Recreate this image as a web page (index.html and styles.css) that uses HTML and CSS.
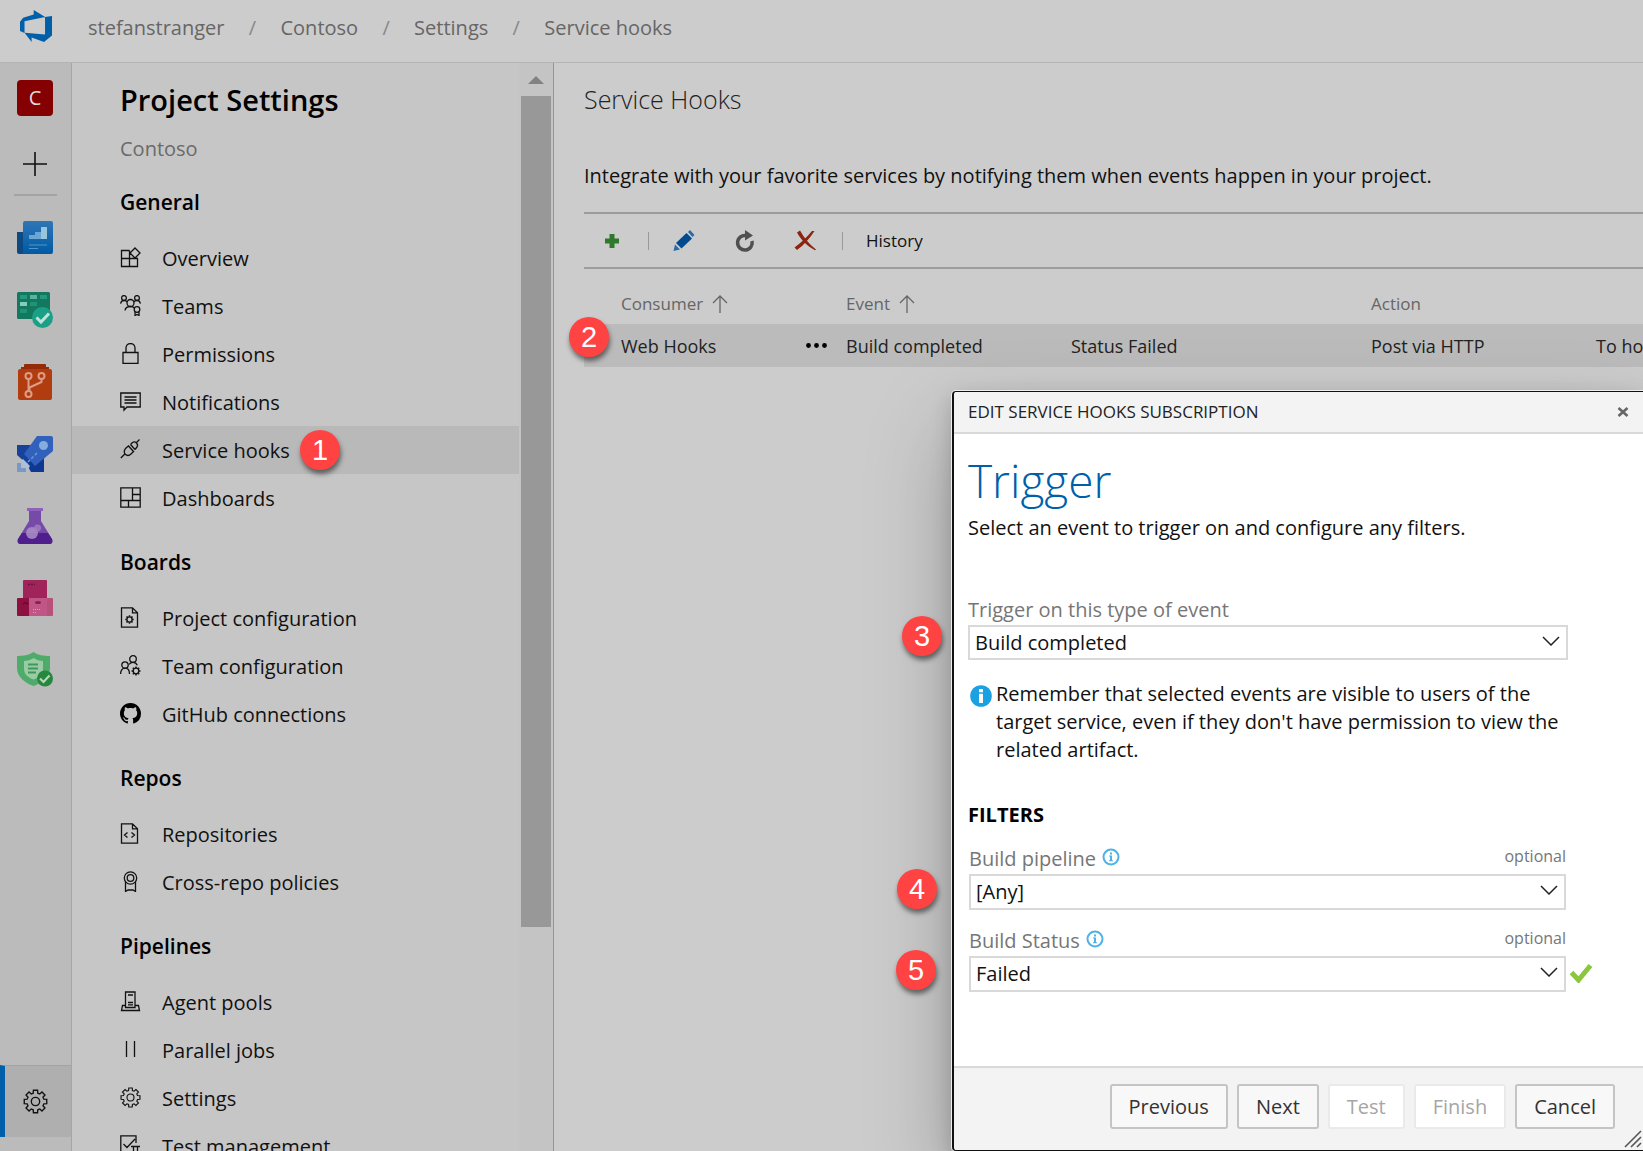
FILE: index.html
```html
<!DOCTYPE html>
<html lang="en">
<head>
<meta charset="utf-8">
<title>Service hooks - Project Settings</title>
<link rel="stylesheet" href="styles.css">
</head>
<body>
<svg class="defs" aria-hidden="true">
  <symbol id="gear" viewBox="0 0 24 24">
    <path d="M9.8 4 10 1.2H14L14.2 4 16.1 4.8 18.2 2.9 21.1 5.8 19.2 7.9 20 9.8 22.8 10V14L20 14.2 19.2 16.1 21.1 18.2 18.2 21.1 16.1 19.2 14.2 20 14 22.8H10L9.8 20 7.9 19.2 5.8 21.1 2.9 18.2 4.8 16.1 4 14.2 1.2 14V10L4 9.8 4.8 7.9 2.9 5.8 5.8 2.9 7.9 4.8Z"/>
    <circle cx="12" cy="12" r="4"/>
  </symbol>
  <symbol id="info" viewBox="0 0 18 18">
    <circle cx="9" cy="9" r="7.5" fill="none" stroke="#4db3e6" stroke-width="2"/>
    <path d="M8 4.6h2v2H8zM7 7.6h3v4.6h1v1H7v-1h1V8.6H7z" fill="#4db3e6"/>
  </symbol>
</svg>

<div class="app">
  <header class="topbar">
    <a class="logo" href="#" aria-label="Home"><svg viewBox="0 0 18 18" width="36" height="36"><path fill="#005fa9" d="M17 4v9.74l-4 3.28-6.2-2.26V17l-3.51-4.59 10.23.8V4.44zm-3.41.49L7.85 1v2.29L2.58 4.84 1 6.87v4.61l2.26 1V6.57z"/></svg></a>
    <nav class="crumbs" aria-label="Breadcrumb">
      <a href="#">stefanstranger</a><span class="slash">/</span>
      <a href="#">Contoso</a><span class="slash">/</span>
      <a href="#">Settings</a><span class="slash">/</span>
      <a href="#">Service hooks</a>
    </nav>
  </header>

  <div class="columns">
    <nav class="rail" aria-label="Project">
      <a class="rail-item rail-project" href="#"><span class="tile">C</span></a>
      <button class="rail-item rail-add" type="button" aria-label="Add"><svg width="26" height="26" viewBox="0 0 26 26"><path d="M13 1v24M1 13h24" stroke="#111" stroke-width="1.6"/></svg></button>
      <a class="rail-item" href="#" aria-label="Overview"><svg width="36" height="36" viewBox="0 0 36 36">
        <defs><linearGradient id="gb" x2="0" y2="1"><stop stop-color="#2f76b6"/><stop offset="1" stop-color="#005aa3"/></linearGradient></defs>
        <path d="M0 12h8v22H2a2 2 0 0 1-2-2z" fill="#0d4a82"/>
        <path d="M8 1h26a2 2 0 0 1 2 2v29a2 2 0 0 1-2 2H4c2 0 2-2 2-3V3a2 2 0 0 1 2-2z" fill="url(#gb)"/>
        <path d="M12 15h6v-3h6V7h6v12H12z" fill="#6ba5d3"/><path d="M24 7h6v12h-6z" fill="#98c6dd"/>
        <path d="M12 25h18M12 28.500h9" stroke="#4d96d0"/></svg></a>
      <a class="rail-item" href="#" aria-label="Boards"><svg width="36" height="36" viewBox="0 0 36 36">
        <rect width="33" height="27" rx="1.500" fill="#14785f"/>
        <path d="M3 3h7v4H3zM23 3h7v4h-7z" fill="#23997f"/><path d="M13 3h7v4h-7z" fill="#5ab39f"/><path d="M3 10h7v4H3z" fill="#86ccbd"/><path d="M13 10h7v4h-7zM3 17h7v4H3z" fill="#1a9579"/>
        <circle cx="25.500" cy="25.500" r="10.500" fill="#1aa086"/><path d="m19.500 25.500 4.500 4.500 8-8.500" fill="none" stroke="#c3e2dc" stroke-width="3"/></svg></a>
      <a class="rail-item" href="#" aria-label="Repos"><svg width="36" height="36" viewBox="0 0 36 36">
        <path d="M7 1a1 1 0 0 1 1-1h20a1 1 0 0 1 1 1v2h3v3H4V3h3z" fill="#942a08"/>
        <rect x="1" y="5" width="34" height="31" rx="2" fill="#b13c10"/>
        <g fill="none" stroke="#dd9c86" stroke-width="2"><circle cx="11.500" cy="12" r="3"/><circle cx="24.500" cy="12" r="3"/><circle cx="11.500" cy="30" r="3"/><path d="M11.500 15v12M24.500 15v3l-12 5.500v3"/></g></svg></a>
      <a class="rail-item" href="#" aria-label="Pipelines"><svg width="36" height="36" viewBox="0 0 36 36">
        <path d="M0 9h18v18H9l-9-8z" fill="#16429b"/><path d="M12 22h15v14H14l-4-7z" fill="#0f3893"/>
        <path d="M20 0h14a2 2 0 0 1 2 2v13L18 30 7 18z" fill="#3161bd"/>
        <circle cx="26.500" cy="9.500" r="4.500" fill="#84acdc"/>
        <path d="m20 17-9 9" stroke="#6c96d7" stroke-width="1.500" stroke-dasharray="3 2"/>
        <path d="M0 27h4v5h5v4H0z" fill="#7899c8"/><path d="m3 26 3-3 7 7-3 5-2-4z" fill="#aebfd8"/></svg></a>
      <a class="rail-item" href="#" aria-label="Test Plans"><svg width="36" height="36" viewBox="0 0 36 36">
        <path d="M12 1h12v12l11 18c1 3 0 5-3 5H4c-3 0-4-2-3-5l11-18z" fill="#764ba8"/>
        <path d="M5 25h26l4 6c1 3 0 5-3 5H4c-3 0-4-2-3-5z" fill="#4f1f8d"/><path d="M10 0h16v3H10z" fill="#8e62b9"/>
        <circle cx="15" cy="25" r="6" fill="#ad8fc6" opacity=".85"/><circle cx="20.500" cy="20" r="3.500" fill="#a27fc6" opacity=".8"/></svg></a>
      <a class="rail-item" href="#" aria-label="Artifacts"><svg width="36" height="36" viewBox="0 0 36 36">
        <rect x="6" width="24" height="20" rx="1" fill="#a02459"/><path d="M11 4.500h7" stroke="#6d1238" stroke-dasharray="2 1" stroke-width="1.500"/>
        <path d="M1 18h11v18H1a1 1 0 0 1-1-1V19a1 1 0 0 1 1-1z" fill="#8d1140"/><path d="M12 18h18v18H12z" fill="#c05685"/><path d="M30 18h5a1 1 0 0 1 1 1v16a1 1 0 0 1-1 1h-5z" fill="#b7517a"/>
        <path d="M6 24q2.500-3 5 0" fill="none" stroke="#54001f"/><ellipse cx="21" cy="22.500" rx="3" ry="1.500" fill="#8d1f4f"/><path d="M16 29.500h8M16 32.500h4" stroke="#dd9cb8" stroke-dasharray="1 1"/></svg></a>
      <a class="rail-item" href="#" aria-label="Compliance"><svg width="36" height="36" viewBox="0 0 36 36">
        <path d="M16.500 0c4 3 10 4 16.500 4v12c0 9-8 15-16.500 18C8 31 0 25 0 16V4c6.500 0 12-1 16.500-4z" fill="#4fab69"/>
        <path d="M16.500 6c3 2 6 3 9.500 3v8c0 5-4 8.500-9.500 10.500C11 25.500 7 22 7 17V9c3.500 0 7-1 9.500-3z" fill="#9bcba6"/>
        <path d="M11 12.500h10M11 16.500h10M11 20.500h8" stroke="#3c9a55" stroke-width="1.800"/>
        <circle cx="28" cy="26.500" r="8" fill="#27883d"/><path d="m23 26.500 3.500 3.500 6-6.500" fill="none" stroke="#b5d7bc" stroke-width="2.200"/></svg></a>
      <a class="rail-item rail-settings" href="#" aria-label="Project settings"><svg class="line" width="25" height="25"><use href="#gear"/></svg></a>
    </nav>

    <aside class="sidebar">
      <div class="side-scroll">
        <h1>Project Settings</h1>
        <p class="side-project">Contoso</p>

        <h2>General</h2>
        <a class="side-item" href="#"><svg class="line" width="21" height="21" viewBox="0 0 21 21"><path d="M9.500 3.500h-8v16h16v-8h-16M9.500 3.500v16M15 1l5 5-5 5-5-5z"/></svg>Overview</a>
        <a class="side-item" href="#"><svg class="line" width="21" height="21" viewBox="0 0 21 21"><circle cx="4" cy="3" r="2.400"/><circle cx="17" cy="3" r="2.400"/><circle cx="10.500" cy="8" r="3.500"/><circle cx="17" cy="14.500" r="2.800"/><path d="M.6 8.500C1 6.500 2.500 5.500 4 5.500s2.500.5 3.200 1.500M20.400 8.500c-.4-2-1.900-3-3.400-3s-2.500.5-3.200 1.500M5 15.500c.4-3 3-4 5.500-4 1.500 0 3 .5 3.800 1.500M15 17v3.500l2-1 2 1V17"/></svg>Teams</a>
        <a class="side-item" href="#"><svg class="line" width="21" height="21" viewBox="0 0 21 21"><path d="M3 9.500h15v11H3zM6 9.500V5a4.500 4.500 0 0 1 9 0v4.500"/></svg>Permissions</a>
        <a class="side-item" href="#"><svg class="line" width="21" height="21" viewBox="0 0 21 21"><path d="M.8 2h19.400v14H7l-3 3.200V16H.8zM4.500 6h12M4.500 9h12M4.500 12h12"/></svg>Notifications</a>
        <a class="side-item current" href="#"><svg class="line" width="21" height="21" viewBox="0 0 21 21"><path d="m.8 19 4-4M16 4l3.500-3.500M5 15c-1.500-2.500-.5-4.500 1-6l2.500-2 5 5.500-2.500 2.500c-1.500 1.500-4 2-6 0zM8 6.500l6 6.500M10.500 5.500l4.500 5M10.500 5.500 12.500 3.500c1.500-1 3-.5 4 .5s1.500 2.500.5 4L15 10.500"/></svg>Service hooks<span class="badge badge-1">1</span></a>
        <a class="side-item" href="#"><svg class="line" width="21" height="21" viewBox="0 0 21 21"><path d="M.8.8h19.400v19.400H.8zM12.500 1v12.500M1 13.500h19M12.500 7.500H20M8.500 13.500V20"/></svg>Dashboards</a>

        <h2>Boards</h2>
        <a class="side-item" href="#"><svg class="line" width="21" height="21" viewBox="0 0 21 21"><path d="M1.500.8h11l5 5v14.400h-16zM12.500.8v5h5"/><circle cx="9.500" cy="12.500" r="2.600"/><path stroke-width="1.500" d="M9.500 8.300v1.500M9.500 15.200v1.500M5.300 12.500h1.500M12.200 12.500h1.500M6.500 9.500l1 1M11.500 14.500l1 1M12.500 9.500l-1 1M7.500 14.500l-1 1"/></svg>Project configuration</a>
        <a class="side-item" href="#"><svg class="line" width="21" height="21" viewBox="0 0 21 21"><circle cx="13" cy="4" r="3.300"/><circle cx="5" cy="10" r="3.200"/><path d="M.6 19c0-3.500 1.500-5.800 4.400-5.800S9.500 15.500 9.500 19M9 9.500c1-1.500 2.300-2.200 4-2.200s3.500 1 4.300 3"/><circle cx="16" cy="16" r="2.800"/><path stroke-width="1.500" d="M16 11.500V13M16 19v1.500M11.500 16H13M19 16h1.500M12.800 12.800l1 1M18.200 18.200l1 1M19.200 12.800l-1 1M13.800 18.200l-1 1"/></svg>Team configuration</a>
        <a class="side-item" href="#"><svg width="21" height="21" viewBox="0 0 16 16"><path d="M8 0C3.580 0 0 3.580 0 8c0 3.540 2.290 6.530 5.470 7.590.4.070.55-.17.55-.38 0-.19-.01-.82-.01-1.490-2.010.37-2.530-.49-2.690-.94-.09-.23-.48-.94-.82-1.130-.28-.15-.68-.52-.01-.53.63-.01 1.080.58 1.230.82.72 1.210 1.870.87 2.330.66.070-.52.28-.87.51-1.070-1.780-.2-3.640-.89-3.640-3.950 0-.87.31-1.590.82-2.150-.08-.2-.36-1.020.08-2.120 0 0 .67-.21 2.200.82.64-.18 1.320-.27 2-.27.68 0 1.360.09 2 .27 1.530-1.040 2.200-.82 2.200-.82.44 1.100.16 1.920.08 2.120.51.56.82 1.270.82 2.150 0 3.070-1.870 3.750-3.650 3.950.29.25.54.73.54 1.480 0 1.070-.01 1.930-.01 2.200 0 .21.15.46.55.38A8.013 8.013 0 0016 8c0-4.420-3.580-8-8-8z"/></svg>GitHub connections</a>

        <h2>Repos</h2>
        <a class="side-item" href="#"><svg class="line" width="21" height="21" viewBox="0 0 21 21"><path d="M1.500.8h11l5 5v14.400h-16zM12.500.8v5h5M7.500 9.500l-3 2.500 3 2.500M11.500 9.500l3 2.500-3 2.500"/></svg>Repositories</a>
        <a class="side-item" href="#"><svg class="line" width="21" height="21" viewBox="0 0 21 21"><circle cx="10.500" cy="7" r="6.200"/><circle cx="10.500" cy="7" r="3.300"/><path d="M5.500 11v9.500l2.500-1.500 2.500 0 2.500 0 2.500 1.500V11"/></svg>Cross-repo policies</a>

        <h2>Pipelines</h2>
        <a class="side-item" href="#"><svg class="line" width="21" height="21" viewBox="0 0 21 21"><path d="M5.500 16.500V1h9.500v15.500zM5.500 14.500h-3l-1 5h18l-1-5H15M8 4h5M8 11.500h5M8 13.800h5"/></svg>Agent pools</a>
        <a class="side-item" href="#"><svg class="line" width="21" height="21" viewBox="0 0 21 21"><path d="M6.500 2v16M14.500 2v16"/></svg>Parallel jobs</a>
        <a class="side-item" href="#"><svg class="line" width="21" height="21"><use href="#gear"/></svg>Settings</a>
        <a class="side-item" href="#"><svg class="line" width="21" height="21" viewBox="0 0 21 21"><path d="M16 8V.8H.8v17.400H10M3.500 9l3.500 3.500 8-8.500M11 11.500h9M13.500 11.500v8M17.500 11.500v8"/></svg>Test management</a>
      </div>
      <div class="scrollbar" aria-hidden="true"><span class="scroll-up"></span><span class="thumb"></span></div>
    </aside>

    <main class="content">
      <h2 class="content-title">Service Hooks</h2>
      <p class="intro">Integrate with your favorite services by notifying them when events happen in your project.</p>
      <div class="toolbar">
        <button type="button" aria-label="Create"><svg width="24" height="24" viewBox="0 0 24 24"><path d="M9.500 5h5v4.500H19v5h-4.500V19h-5v-4.500H5v-5h4.500z" fill="#2f7a2a"/></svg></button>
        <i class="sep"></i>
        <button type="button" aria-label="Edit"><svg width="24" height="24" viewBox="0 0 24 24"><path d="m14.500 4 5.500 5.500L9.500 19.500 4 14z" fill="#004a8f"/><path d="m3 15.500 5 5L1.500 22zM16 3l2-2 4.500 5-2 2z" fill="#2a6aa8"/></svg></button>
        <button type="button" aria-label="Refresh"><svg width="24" height="24" viewBox="0 0 24 24"><path d="M13 6.500A7.300 7.300 0 1 0 19 12" fill="none" stroke="#4f4f4f" stroke-width="3.500"/><path d="m12 1 8 5.500-8 5z" fill="#4f4f4f"/></svg></button>
        <button type="button" aria-label="Delete"><svg width="24" height="24" viewBox="0 0 24 24"><path d="M.5 18.500C7 14 13 8 18 2l2.500 0C16 9 10 16 3 21z" fill="#8c2410"/><path d="M3 3.500 6 1.500C10 9 15 15 22 20.500l-1 .8C13 17 7 11 3 3.500z" fill="#8c2410"/></svg></button>
        <i class="sep"></i>
        <button type="button" class="history">History</button>
      </div>
      <div class="table-wrap">
        <table>
          <colgroup><col class="c1"><col class="c2"><col class="c3"><col class="c4"><col class="c5"></colgroup>
          <thead><tr>
            <th scope="col"><span class="sorted">Consumer <svg width="16" height="19" viewBox="0 0 16 19"><path d="M8 18V1M1 8l7-7 7 7"/></svg></span></th>
            <th scope="col"><span class="sorted">Event <svg width="16" height="19" viewBox="0 0 16 19"><path d="M8 18V1M1 8l7-7 7 7"/></svg></span></th>
            <th></th>
            <th scope="col">Action</th>
            <th></th>
          </tr></thead>
          <tbody><tr>
            <td><span class="consumer">Web Hooks<button type="button" class="more" aria-label="More actions"><svg width="21" height="5" viewBox="0 0 21 5"><circle cx="2.500" cy="2.500" r="2.400"/><circle cx="10.500" cy="2.500" r="2.400"/><circle cx="18.500" cy="2.500" r="2.400"/></svg></button></span><span class="badge badge-2">2</span></td>
            <td>Build completed</td>
            <td>Status Failed</td>
            <td>Post via HTTP</td>
            <td>To host</td>
          </tr></tbody>
        </table>
      </div>
    </main>
  </div>

  <section class="dialog" role="dialog" aria-labelledby="dlg-title">
    <header class="dialog-head">
      <h2 id="dlg-title">EDIT SERVICE HOOKS SUBSCRIPTION</h2>
      <button type="button" aria-label="Close"><svg width="12" height="10" viewBox="0 0 12 10"><path d="M1.500 1l9 8M10.500 1l-9 8" stroke="#666" stroke-width="2.600"/></svg></button>
    </header>
    <form class="dialog-body">
      <h3>Trigger</h3>
      <p class="lead">Select an event to trigger on and configure any filters.</p>

      <div class="field field-event">
        <div class="label-row"><label for="event">Trigger on this type of event</label></div>
        <div class="select"><select id="event"><option>Build completed</option></select><svg width="18" height="10" viewBox="0 0 18 10"><path d="m1 1 8 8 8-8"/></svg></div>
        <span class="badge badge-3">3</span>
      </div>

      <div class="note">
        <svg width="22" height="22" viewBox="0 0 22 22"><circle cx="11" cy="11" r="10.800" fill="#1ba1e2"/><path d="M9 4h4v3.200H9zM9 8.800h4V18H9z" fill="#fff"/></svg>
        <p>Remember that selected events are visible to users of the target service, even if they don't have permission to view the related artifact.</p>
      </div>

      <h4>FILTERS</h4>
      <div class="field filter">
        <div class="label-row"><label for="pipeline">Build pipeline</label><svg class="info" width="18" height="18"><use href="#info"/></svg><span class="optional">optional</span></div>
        <div class="select"><select id="pipeline"><option>[Any]</option></select><svg width="18" height="10" viewBox="0 0 18 10"><path d="m1 1 8 8 8-8"/></svg></div>
        <span class="badge badge-4">4</span>
      </div>
      <div class="field filter">
        <div class="label-row"><label for="status">Build Status</label><svg class="info" width="18" height="18"><use href="#info"/></svg><span class="optional">optional</span></div>
        <div class="select"><select id="status"><option>Failed</option></select><svg width="18" height="10" viewBox="0 0 18 10"><path d="m1 1 8 8 8-8"/></svg></div>
        <span class="badge badge-5">5</span>
        <svg class="valid" width="24" height="20" viewBox="0 0 24 20"><path d="m2.500 9.500 7 7.500L21.500 2.500" fill="none" stroke="#8cc63e" stroke-width="5"/></svg>
      </div>
    </form>
    <footer class="dialog-foot">
      <button type="button">Previous</button>
      <button type="button">Next</button>
      <button type="button" disabled>Test</button>
      <button type="button" disabled>Finish</button>
      <button type="button">Cancel</button>
      <svg class="grip" width="18" height="18" viewBox="0 0 18 18"><path d="M1 17 17 1M7 17 17 7M13 17l4-4" stroke="#555" stroke-width="1.600"/></svg>
    </footer>
  </section>
</div>
</body>
</html>
```

FILE: styles.css
```css
* { box-sizing: border-box; }
body {
  margin: 0;
  font: 20px/28px "Open Sans", "Noto Sans", sans-serif;
  color: #111;
  background: #ccc;
}
h1, h2, h3, h4, p { margin: 0; }
a { color: inherit; text-decoration: none; }
button { font: inherit; color: inherit; background: none; border: 0; padding: 0; cursor: pointer; }
svg { display: block; flex: none; }
.defs { display: none; }
.line { fill: none; stroke: #111; stroke-width: 1.3; }

.app { position: relative; height: 100vh; overflow: hidden; display: flex; flex-direction: column; }

/* Top bar */
.topbar {
  flex: none; display: flex; align-items: flex-start; height: 63px;
  padding: 8px 18px; gap: 34px; border-bottom: 1px solid #b4b4b4; color: #666;
}
.crumbs { display: flex; padding-top: 6px; }
.slash { width: 56px; text-align: center; color: #888; }

.columns { flex: 1; min-height: 0; display: flex; }

/* Icon rail */
.rail {
  flex: none; width: 72px; display: flex; flex-direction: column;
  background: #bbb; border-right: 1px solid #a6a6a6;
}
.rail-item { height: 72px; padding-right: 1px; display: grid; place-items: center; }
.rail-project { height: 70px; }
.tile { width: 36px; height: 36px; border-radius: 4px; background: #850000; color: #ddd; text-align: center; line-height: 36px; }
.rail-add { height: 63px; margin: 0 14px 6px; border-bottom: 2px solid #a3a3a3; }
.rail-settings {
  margin-top: auto; margin-bottom: 14px; background: #afafaf;
  border-left: 5px solid #005fa9; border-top: 1px solid #a3a3a3; padding-right: 5px;
}

/* Settings list */
.sidebar { flex: none; width: 482px; display: flex; background: #c6c6c6; border-right: 1px solid #959595; }
.side-scroll { flex: 1; overflow: hidden; }
.side-scroll h1 { padding: 16px 48px 0; font-size: 29px; line-height: 42px; font-weight: 600; color: #000; }
.side-project { padding: 14px 48px 0; color: #6a6a6a; }
.side-scroll h2 { padding: 24px 48px 16px; font-size: 21px; line-height: 32px; font-weight: 600; color: #000; }
.side-project + h2 { padding-top: 23px; }
.side-item { position: relative; display: flex; align-items: center; gap: 21px; height: 48px; padding: 2px 0 0 48px; }
.side-item svg { margin-bottom: 3px; }
.current { background: #b9b9b9; }
.scrollbar { flex: none; width: 34px; display: flex; flex-direction: column; align-items: center; background: #c4c4c4; }
.scrollbar::after { content: ""; flex: 10; }
.scroll-up { flex: none; margin-bottom: 12px; border: 8px solid transparent; border-top-width: 13px; border-bottom-color: #828282; }
.thumb { flex: 37; width: 30px; background: #989898; }

/* Main area */
.content { flex: 1; min-width: 0; padding: 15px 0 0 30px; }
.content-title { font-size: 25px; line-height: 42px; font-weight: 300; color: #222; }
.intro { padding-top: 42px; }
.toolbar {
  display: flex; align-items: center; height: 57px; margin-top: 22px;
  border-top: 2px solid #9c9c9c; border-bottom: 2px solid #9c9c9c; padding-left: 16px;
}
.toolbar button + button { margin-left: 37px; }
.sep { width: 1px; height: 18px; background: #999; margin: 0 23px 0 24px; }
.history { font-size: 17px; }
.table-wrap { overflow: hidden; margin-left: -20px; padding-left: 20px; }
table { width: 1200px; table-layout: fixed; border-collapse: collapse; font-size: 18px; }
.c1 { width: 262px; } .c2 { width: 225px; } .c3 { width: 300px; } .c4 { width: 225px; }
th { height: 55px; padding: 15px 0 0; text-align: left; font-weight: 400; font-size: 17px; color: #666; }
td { height: 43px; padding: 0; background: #bbb; color: #222; }
th:first-child, td:first-child { padding-left: 37px; position: relative; }
.sorted { display: flex; align-items: center; gap: 9px; }
.sorted svg { fill: none; stroke: #666; stroke-width: 1.3; }
.consumer { display: flex; justify-content: space-between; align-items: center; padding-right: 19px; }

/* Numbered callouts lie over the page */
.badge {
  position: absolute; width: 40px; height: 40px; border-radius: 50%;
  background: #ff4343; color: #fff; text-align: center;
  font: 29px/40px "Liberation Sans", Arial, sans-serif;
  box-shadow: 1px 4px 5px rgba(0, 0, 0, .5);
}
.badge-1 { left: 228px; top: 4px; }
.badge-2 { left: -15px; top: -7px; }
.badge-3 { left: -66px; bottom: 4px; }
.badge-4 { left: -72px; bottom: 1px; }
.badge-5 { left: -73px; bottom: 2px; }

/* Dialog window */
.dialog {
  position: absolute; right: 0; bottom: 0; width: 691px;
  display: flex; flex-direction: column; background: #fff;
  border: 1px solid #111; border-left-width: 2px; border-right: 0; border-radius: 4px 0 0 4px;
  box-shadow: 0 0 0 1px #eee, 0 38px 86px rgba(0, 0, 0, .26), 0 7px 22px rgba(0, 0, 0, .18);
}
.dialog-head {
  display: flex; justify-content: space-between; align-items: center; height: 42px;
  padding: 0 14px; background: #f3f3f3; border-bottom: 2px solid #d9d9d9; border-radius: 4px 0 0 0;
}
.dialog-head h2 { font-size: 17px; font-weight: 400; color: #222; }
.dialog-body { padding: 14px 75px 57px 14px; }
.dialog-body h3 { padding-bottom: 2px; font-size: 46px; line-height: 64px; font-weight: 300; color: #005fa9; }
.lead { padding-bottom: 54px; }
.field { position: relative; }
.label-row { display: flex; align-items: center; height: 29px; padding-bottom: 1px; color: #767676; }
.select { position: relative; }
.select select {
  display: block; width: 100%; height: 35px; padding: 0 5px; appearance: none;
  font: inherit; color: #111; background: #fff; border: 2px solid #d9d9d9; border-radius: 0;
}
.select svg { position: absolute; right: 8px; top: 11px; fill: none; stroke: #222; stroke-width: 1.500; pointer-events: none; }
.note { display: flex; gap: 4px; padding: 20px 0 0 2px; }
.note svg { margin-top: 5px; }
.dialog-body h4 { padding: 37px 0 16px; font-size: 20px; line-height: 28px; font-weight: 700; color: #000; }
.filter { margin: 0 2px 17px 1px; }
.filter select { height: 36px; }
.info { margin: 0 0 4px 6px; }
.optional { margin-left: auto; font-size: 16px; padding-bottom: 6px; }
.valid { position: absolute; left: calc(100% + 3px); bottom: 9px; }
.dialog-foot {
  position: relative; display: flex; justify-content: flex-end; gap: 9px;
  height: 84px; padding: 16px 28px 0 0; background: #f3f3f3; border-top: 2px solid #d9d9d9; border-radius: 0 0 0 4px;
}
.dialog-foot button { height: 45px; padding: 0 17px; border: 2px solid #c4c4c4; border-radius: 3px; background: #f8f8f8; color: #333; }
.dialog-foot button:disabled { border-color: #eaeaea; background: #fff; color: #a6a6a6; }
.grip { position: absolute; right: 1px; bottom: 2px; }
```
